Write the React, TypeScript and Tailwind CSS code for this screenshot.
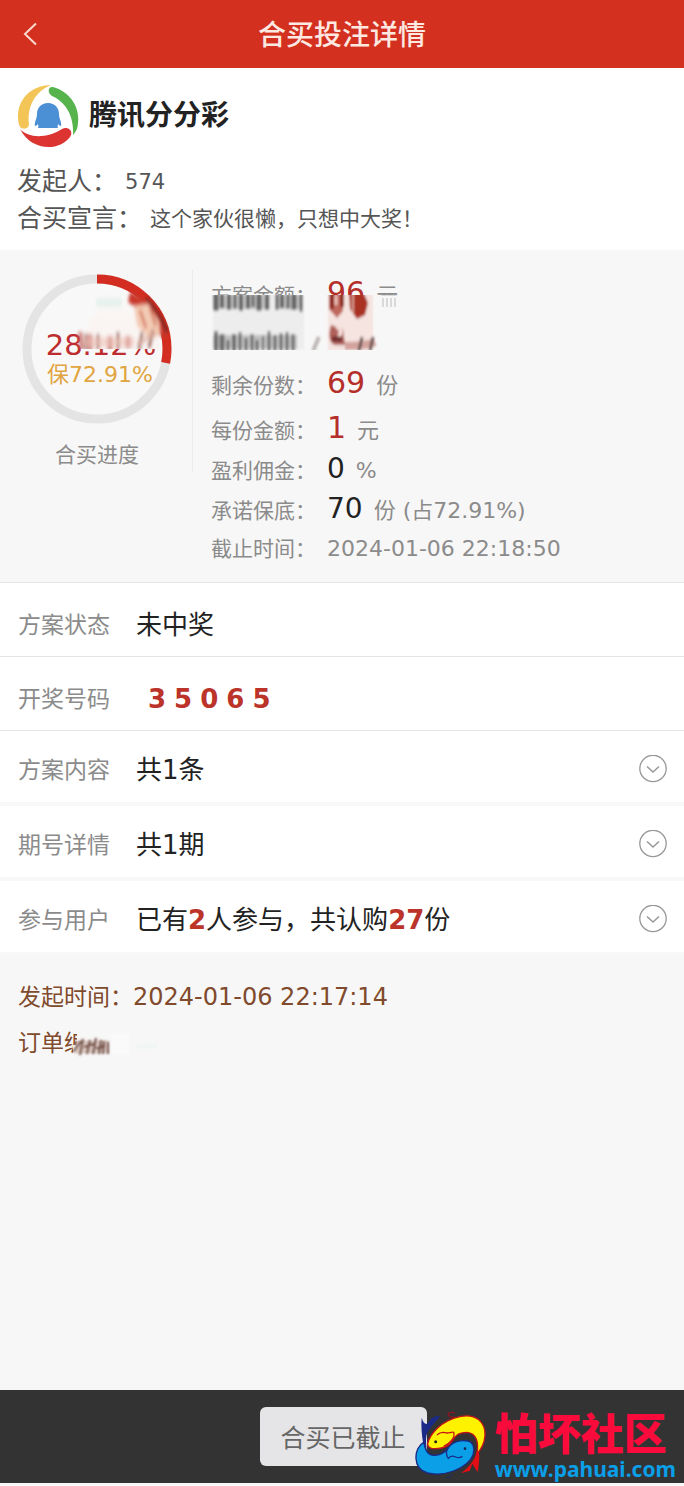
import type { ReactNode } from 'react';

const smearTop = [
  [5, 5, 16], [11, 4, 13], [18, 4, 15], [24, 3, 14], [30, 4, 16], [37, 4, 14], [42, 3, 12], [48, 5, 16], [56, 4, 15], [66, 3, 15], [71, 4, 13], [77, 3, 14], [83, 5, 15], [90, 3, 17],
];

const smearBottom = [
  [5, 4, 19], [11, 5, 16], [17, 3, 10], [23, 4, 16], [29, 3, 18], [35, 3, 12], [41, 3, 16], [46, 3, 10], [52, 2, 14], [58, 3, 19], [64, 3, 15], [70, 3, 17], [76, 3, 18], [82, 3, 16],
];

function BackIcon() {
  return (
    <svg width="16" height="26" viewBox="0 0 16 26" fill="none" stroke="#fbd9cf" strokeWidth="2" aria-hidden="true">
      <path d="M14 2.500 3 13l11 10.500" />
    </svg>
  );
}

function LotteryLogo() {
  return (
    <svg className="shrink-0" width="62" height="64" viewBox="0 0 62 64" aria-hidden="true">
      <path d="M34 1C14 1 0 16 1 34c0 4 1 7 2 9 3 3 9 2 9-3C10 24 17 8 34 1Z" fill="#f2c556" />
      <path d="M36 3c18 5 27 21 25 36 0 5-2 9-5 12C57 35 51 19 35 12c-5-3-4-10 1-9Z" fill="#57b44c" />
      <path d="M3 45c8 9 26 10 42 0 6-3 12 2 8 8C42 68 14 67 3 45Z" fill="#dc3430" />
      <path d="M31 19c-7 0-11 5-11 11 0 5-3 8-2 12 1 0 2-1 3-2 0 2 1 2 0 4h20c-1-2 0-2 0-4 1 1 2 2 3 2 1-4-2-7-2-12 0-6-4-11-11-11Z" fill="#4b8fd4" />
    </svg>
  );
}

function ProgressRing() {
  const r = 70;
  const c = 2 * Math.PI * r;
  return (
    <svg className="absolute inset-0" width="150" height="150" viewBox="0 0 150 150" aria-hidden="true">
      <circle cx="75" cy="75" r={r} fill="#f9f8f8" stroke="#e5e4e4" strokeWidth="9" />
      <circle
        cx="75"
        cy="75"
        r={r}
        fill="none"
        stroke="#d22d20"
        strokeWidth="9"
        strokeDasharray={`${c * 0.2812} ${c}`}
        transform="rotate(-90 75 75)"
      />
    </svg>
  );
}

function RingSmudge() {
  return (
    <svg className="absolute inset-0" width="150" height="150" viewBox="0 0 150 150" aria-hidden="true">
      <defs>
        <filter id="ring-soft" x="-30%" y="-30%" width="160%" height="160%">
          <feGaussianBlur stdDeviation="1.5 2" />
        </filter>
        <clipPath id="ring-clip">
          <path d="M54 16h96v59H54Z" />
        </clipPath>
      </defs>
      <g clipPath="url(#ring-clip)">
        <path d="M62 56h75v19H62Z" fill="#f9f4f2" />
        <g filter="url(#ring-soft)">
          <path d="M74 24h26v9H74Z" fill="#e6f1ec" />
          <path d="M80 36h30l26 10v18H62c2-12 8-22 18-28Z" fill="#faf5f3" />
          <path d="M108 18c10 2 22 12 32 28l6 18-8-2-12-20-20-14Z" fill="#c9392c" />
          <path d="M112 32l14-2 11 18 1 12-9 6-14-14Z" fill="#f3cbb4" />
          <path d="M124 24c9 10 16 20 21 34" stroke="#5a2321" strokeWidth="2.500" fill="none" />
          <path d="M118 36l6 18m4-20 6 18" stroke="#d67a62" strokeWidth="2.500" fill="none" />
          <path d="M58 58l2 18m8-16v18m20-16v16m18-16v12" stroke="#c46a64" strokeWidth="5" opacity=".75" fill="none" />
          <path d="M64 60v16m12-16v16m20-18v18m24-18-3 18m14-20-4 18" stroke="#93584f" strokeWidth="3" opacity=".85" fill="none" />
          <path d="M62 68h50" stroke="#eec3b8" strokeWidth="10" opacity=".6" fill="none" />
          <path d="M116 70c4-4 12-6 18-12" stroke="#ddb0a2" strokeWidth="5" opacity=".7" fill="none" />
        </g>
      </g>
    </svg>
  );
}

function DetailSmudge() {
  return (
    <svg className="pointer-events-none absolute top-[25px] left-0" width="200" height="60" viewBox="0 0 200 60" aria-hidden="true">
      <defs>
        <filter id="row-soft" x="-10%" y="-10%" width="120%" height="120%">
          <feGaussianBlur stdDeviation="1 1.8" />
        </filter>
        <clipPath id="row-clip">
          <rect x="0" y="0" width="200" height="55" />
        </clipPath>
      </defs>
      <rect x="0" y="0" width="200" height="60" fill="#f8f7f7" />
      <g clipPath="url(#row-clip)">
        <g filter="url(#row-soft)">
          <rect x="2" y="-4" width="91" height="59" fill="#ededed" />
          <path d="M2 7h57M64 7h28M2 47h84" stroke="#a8a8a8" strokeWidth="14" opacity=".65" />
          {smearTop.map(([x, w, h]) => (
            <path key={x} d={`M${x}-2V${h}`} stroke="#444" strokeWidth={w} opacity=".7" />
          ))}
          {smearBottom.map(([x, w, h]) => (
            <path key={x} d={`M${x} ${55 - h}V58`} stroke="#505050" strokeWidth={w} opacity=".7" />
          ))}
          <rect x="117" y="-2" width="45" height="58" fill="#f5e4e0" />
          <path d="M118-4h14v20l-6 7-8-9Z" fill="#c0675c" />
          <path d="M121-4v18m10-18v16" stroke="#8f2c24" strokeWidth="4" fill="none" />
          <path d="M125 0v10" stroke="#ecc3bb" strokeWidth="3" />
          <path d="M138-4h14l5 12-3 12-8 4-7-10Z" fill="#a93324" />
          <path d="M142-2v20" stroke="#d99a8e" strokeWidth="2" />
          <path d="M120 30c-3 10-2 18 4 20h10l-2-16Z" fill="#b0605a" />
          <path d="M125 33c5-2 6 4 3 9" stroke="#f6dfda" strokeWidth="4" fill="none" />
          <path d="M121 44h10" stroke="#6f2a2a" strokeWidth="5" />
          <path d="M134 51c8 0 20 0 30-4" stroke="#d3a39c" strokeWidth="8" fill="none" />
          <path d="M148 56l3-14m8 14 3-14" stroke="#6b5452" strokeWidth="3" />
          <path d="M102 56l6-14" stroke="#bcb6b5" strokeWidth="4" />
        </g>
      </g>
      <path d="M170 0h16m-14 3v9m4-9v9m4-9v9m4-9v9" stroke="#cfcfcf" strokeWidth="2" opacity=".75" />
    </svg>
  );
}

function OrderSmudge() {
  return (
    <svg className="absolute top-2 left-[50px]" width="140" height="34" viewBox="0 0 140 34" aria-hidden="true">
      <defs>
        <filter id="order-soft" x="-10%" y="-20%" width="120%" height="140%">
          <feGaussianBlur stdDeviation="0.900 1.300" />
        </filter>
      </defs>
      <path d="M9 0h40v34H5V17h4Z" fill="#f8f7f7" />
      <g filter="url(#order-soft)">
        <path d="M44 6h17v20H44Z" fill="#fafafa" />
        <path d="M68 15h22v6H68Z" fill="#f1f6f5" />
        <path d="M7 19h34" stroke="#c3a79b" strokeWidth="13" opacity=".6" />
        <path d="M5 24l8-11m-1 14 3-16m4 15 3-14m-6 7 10-3m-1 10 3-16m3 16 2-14m-5 8 9-2m-2 8 1-13m4 13V14" stroke="#6f4c42" strokeWidth="2" fill="none" />
      </g>
    </svg>
  );
}

type DetailProps = { label: string; value?: string; unit?: string; tone?: 'red' | 'black'; };

function Detail({ label, value, unit, tone }: DetailProps) {
  const red = tone === 'red';
  return (
    <div className={`flex items-baseline whitespace-nowrap ${red ? 'h-[45px] leading-[45px]' : 'h-10 leading-[38px]'}`}>
      <dt className="w-[116px] shrink-0 text-[21px]">{label}：</dt>
      <dd className="flex items-baseline gap-[11px] text-[22px]">
        {value && <span className={red ? 'text-[30px] text-[#b52f2a]' : 'text-[28px] text-[#222]'}>{value}</span>}
        {unit && <span>{unit}</span>}
      </dd>
    </div>
  );
}

function Row({ label, children }: { label: string; children: ReactNode }) {
  return (
    <div className="flex h-[74px] items-center border-b border-[#e4e4e4] px-[18px] pt-3">
      <h2 className="w-[118px] shrink-0 text-[23px] text-[#8b8b8b]">{label}</h2>
      {children}
    </div>
  );
}

function ExpandRow({ label, children }: { label: string; children: ReactNode }) {
  return (
    <button type="button" className="flex h-[75px] w-full items-center border-b-4 border-[#f9f8f8] px-[18px] pt-1 text-left">
      <span className="w-[118px] shrink-0 pt-1 text-[23px] text-[#8b8b8b]">{label}</span>
      <span className="flex-1 pt-1 text-[26px] text-[#222]">{children}</span>
      <svg className="-mr-px shrink-0" width="28" height="28" viewBox="0 0 28 28" fill="none" stroke="#979797" aria-hidden="true">
        <circle cx="14" cy="13.500" r="13.200" strokeWidth="1.300" />
        <path d="m8 11.500 6 5.500 6-5.500" strokeWidth="1.500" />
      </svg>
    </button>
  );
}

function FishLogo() {
  return (
    <svg className="shrink-0" width="80" height="78" viewBox="0 0 240 234" aria-hidden="true">
      <path d="M32 38c6 18 14 24 20 14 8-16 20-18 36-20-10 14-22 26-38 48-8 18-4 40-2 62l-12-30c-4-24-6-50-4-74Z" fill="#1a2a86" />
      <path d="M132 36c-10 2-22-2-20-10 2-6 12-4 20-2" fill="none" stroke="#8f1420" strokeWidth="4" />
      <path d="M104 218c8 0 16-2 20-10" fill="none" stroke="#1a2a70" strokeWidth="3" />
      <path
        d="M50 116C56 90 88 46 150 34c44-8 74 16 72 58-2 24-14 44-24 54 6-34-2-62-30-64-28 0-36 12-46 28-8 14-32 24-60 20-8-2-12-8-12-14Z"
        fill="#fff200"
        stroke="#c4121a"
        strokeWidth="4"
      />
      <path d="M78 90c12-12 22-8 30-6 8 0 14-4 20-2 4 12-2 20-8 26-6 8-12 12-22 16" fill="none" stroke="#c4121a" strokeWidth="4" />
      <circle cx="74" cy="110" r="4.500" fill="#222" />
      <path
        d="M38 112C8 128 2 190 50 204c50 12 120-14 136-54 6-20 2-38-16-42-24-4-46 4-58 20-8 14-28 26-50 22-16-4-20-20-24-38Z"
        fill="#0b9fe8"
        stroke="#1a2a86"
        strokeWidth="4"
      />
      <path d="M112 128c-8 12-8 22 0 32 6-8 14-8 22-4 8 4 14 2 20-2" fill="none" stroke="#1a2a86" strokeWidth="4" />
      <circle cx="162" cy="131" r="4" fill="#17244f" />
      <path d="M198 138c-6 26-22 48-48 66 12-2 20-6 26-6l8-22 16 26c4-24 6-44 4-62Z" fill="#e30d16" />
    </svg>
  );
}

export default function App() {
  return (
    <div className="flex min-h-screen flex-col bg-[#f8f7f7] font-['DejaVu_Sans','Noto_Sans_CJK_SC',sans-serif]">
      <header className="grid h-[68px] grid-cols-[1fr_auto_1fr] items-center bg-[#d4301f] px-[22px]">
        <button type="button" aria-label="返回" className="justify-self-start">
          <BackIcon />
        </button>
        <h1 className="pt-1 text-[28px] leading-10 font-medium text-[#fde9e2]">合买投注详情</h1>
      </header>

      <main className="flex-1">
        <section className="h-[182px] bg-white px-[17px] pt-4">
          <div className="flex items-center gap-2.5">
            <LotteryLogo />
            <h2 className="text-[28px] leading-10 font-bold text-[#222]">腾讯分分彩</h2>
          </div>
          <dl className="pt-[15px] text-[#555]">
            <div className="flex h-[37px] items-center gap-2">
              <dt className="text-[25px]">发起人：</dt>
              <dd className="pt-0.5 text-[21px]">574</dd>
            </div>
            <div className="flex h-[37px] items-center gap-2">
              <dt className="text-[25px]">合买宣言：</dt>
              <dd className="pt-0.5 text-[21px]">这个家伙很懒，只想中大奖！</dd>
            </div>
          </dl>
        </section>

        <section className="flex h-[333px] items-start border-b border-[#e4e4e4] pt-5 text-[#8b8b8b]">
          <div className="flex h-[202px] w-[193px] shrink-0 flex-col items-center border-r border-[#ececec] pt-1 pl-0.5">
            <div className="relative flex h-[150px] w-[150px] flex-col items-center justify-center">
              <ProgressRing />
              <p className="relative pt-5 pl-2 text-[29px] leading-8 text-[#bd2c2f]">28.12%</p>
              <p className="relative pl-1.5 text-[22px] leading-7 text-[#e0a541]">保72.91%</p>
              <RingSmudge />
            </div>
            <p className="pt-[15px] text-[21px] leading-8">合买进度</p>
          </div>
          <dl className="relative ml-[18px]">
            <Detail label="方案金额" value="96" unit="元" tone="red" />
            <Detail label="方案份数" value="96" unit="份" tone="red" />
            <Detail label="剩余份数" value="69" unit="份" tone="red" />
            <Detail label="每份金额" value="1" unit="元" tone="red" />
            <Detail label="盈利佣金" value="0" unit="%" tone="black" />
            <Detail label="承诺保底" value="70" unit="份 (占72.91%)" tone="black" />
            <Detail label="截止时间" unit="2024-01-06 22:18:50" />
            <DetailSmudge />
          </dl>
        </section>

        <section className="bg-white">
          <Row label="方案状态">
            <p className="text-[26px] text-[#222]">未中奖</p>
          </Row>
          <Row label="开奖号码">
            <p className="flex gap-2 pl-3 text-[26px] font-bold text-[#bb3329]">
              {['3', '5', '0', '6', '5'].map((n, i) => (
                <span key={i}>{n}</span>
              ))}
            </p>
          </Row>
          <ExpandRow label="方案内容">共1条</ExpandRow>
          <ExpandRow label="期号详情">共1期</ExpandRow>
          <ExpandRow label="参与用户">
            已有<b className="text-[#bb3329]">2</b>人参与，共认购<b className="text-[#bb3329]">27</b>份
          </ExpandRow>
        </section>

        <section className="px-[18px] pt-[18px] text-[23px] leading-[46px] text-[#804a2c]">
          <p className="flex">
            发起时间：<time className="text-[24px]">2024-01-06 22:17:14</time>
          </p>
          <p className="relative">
            订单编号
            <OrderSmudge />
          </p>
        </section>
      </main>

      <footer className="relative mb-[3px] flex h-[93px] items-center justify-center bg-[#333] pl-0.5">
        <button type="button" disabled className="h-[59px] w-[167px] rounded-md bg-[#e5e5e7] pt-1 text-[25px] text-[#666]">
          合买已截止
        </button>
        <div className="absolute right-2 bottom-0 flex items-end">
          <FishLogo />
          <div className="pb-0.5 pl-1">
            <p className="text-[43px] leading-[44px] font-black text-[#fb0a3c]">怕坏社区</p>
            <p className="font-['Noto_Sans'] text-[21px] leading-6 font-bold text-[#0b9fe8]">www.pahuai.com</p>
          </div>
        </div>
      </footer>
    </div>
  );
}
